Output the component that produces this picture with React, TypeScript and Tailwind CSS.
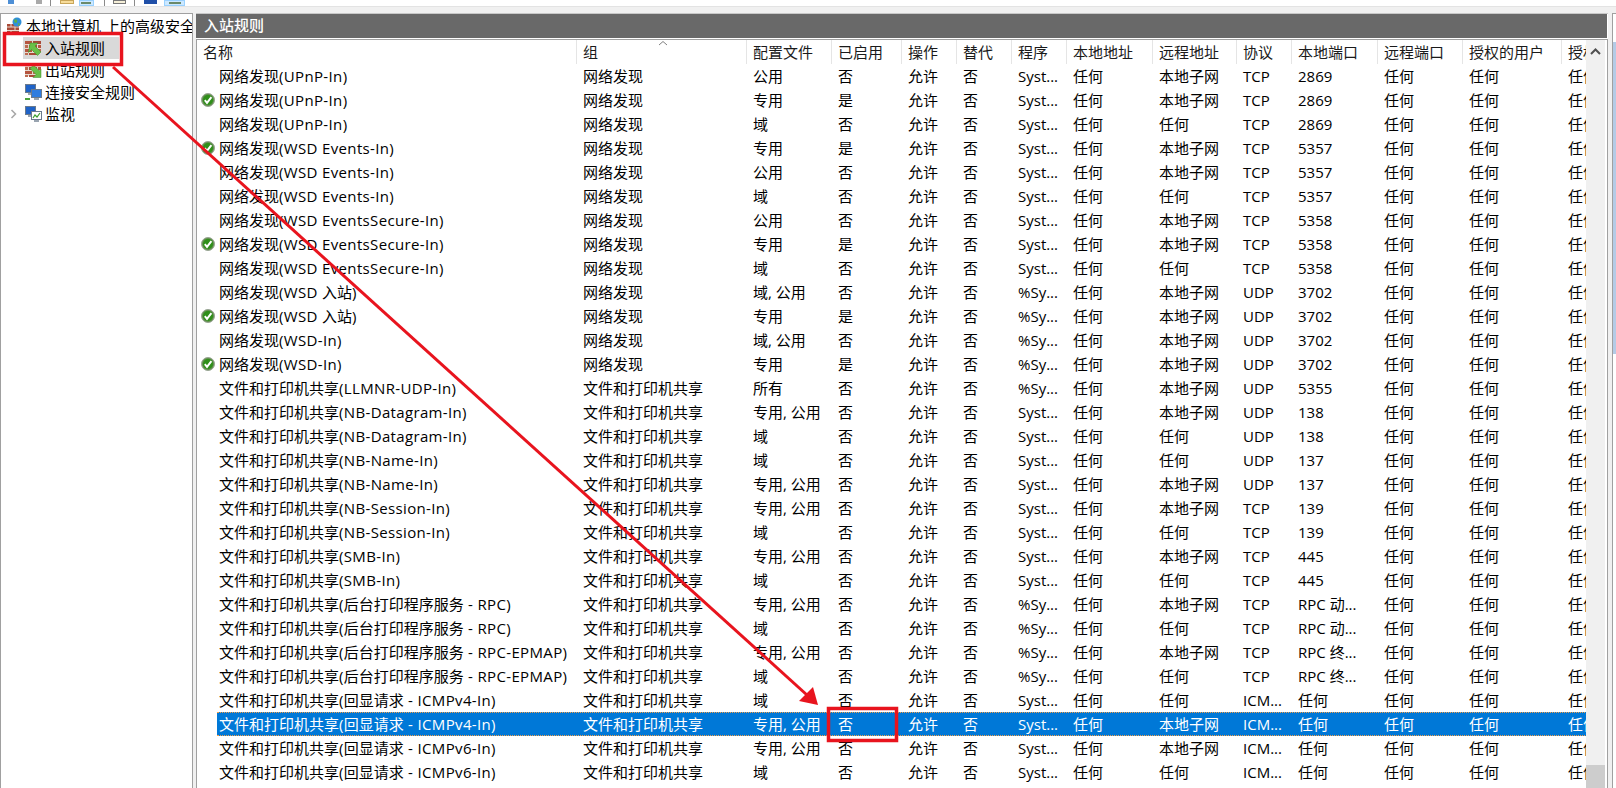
import { ReactNode } from 'react';

type Row = {
  name: string;
  group: string;
  profile: string;
  on: string;
  program: string;
  remote: string;
  proto: string;
  port: string;
  check?: boolean;
  selected?: boolean;
};

const NET = '网络发现';
const FILE = '文件和打印机共享';
const SUB = '本地子网';
const ANY = '任何';
const SYS = 'Syst...';
const PCT = '%Sy...';
const PP = '专用, 公用';

const rows: Row[] = [
  { name: '网络发现(UPnP-In)', group: NET, profile: '公用', on: '否', program: SYS, remote: SUB, proto: 'TCP', port: '2869' },
  { name: '网络发现(UPnP-In)', group: NET, profile: '专用', on: '是', program: SYS, remote: SUB, proto: 'TCP', port: '2869', check: true },
  { name: '网络发现(UPnP-In)', group: NET, profile: '域', on: '否', program: SYS, remote: ANY, proto: 'TCP', port: '2869' },
  { name: '网络发现(WSD Events-In)', group: NET, profile: '专用', on: '是', program: SYS, remote: SUB, proto: 'TCP', port: '5357', check: true },
  { name: '网络发现(WSD Events-In)', group: NET, profile: '公用', on: '否', program: SYS, remote: SUB, proto: 'TCP', port: '5357' },
  { name: '网络发现(WSD Events-In)', group: NET, profile: '域', on: '否', program: SYS, remote: ANY, proto: 'TCP', port: '5357' },
  { name: '网络发现(WSD EventsSecure-In)', group: NET, profile: '公用', on: '否', program: SYS, remote: SUB, proto: 'TCP', port: '5358' },
  { name: '网络发现(WSD EventsSecure-In)', group: NET, profile: '专用', on: '是', program: SYS, remote: SUB, proto: 'TCP', port: '5358', check: true },
  { name: '网络发现(WSD EventsSecure-In)', group: NET, profile: '域', on: '否', program: SYS, remote: ANY, proto: 'TCP', port: '5358' },
  { name: '网络发现(WSD 入站)', group: NET, profile: '域, 公用', on: '否', program: PCT, remote: SUB, proto: 'UDP', port: '3702' },
  { name: '网络发现(WSD 入站)', group: NET, profile: '专用', on: '是', program: PCT, remote: SUB, proto: 'UDP', port: '3702', check: true },
  { name: '网络发现(WSD-In)', group: NET, profile: '域, 公用', on: '否', program: PCT, remote: SUB, proto: 'UDP', port: '3702' },
  { name: '网络发现(WSD-In)', group: NET, profile: '专用', on: '是', program: PCT, remote: SUB, proto: 'UDP', port: '3702', check: true },
  { name: '文件和打印机共享(LLMNR-UDP-In)', group: FILE, profile: '所有', on: '否', program: PCT, remote: SUB, proto: 'UDP', port: '5355' },
  { name: '文件和打印机共享(NB-Datagram-In)', group: FILE, profile: PP, on: '否', program: SYS, remote: SUB, proto: 'UDP', port: '138' },
  { name: '文件和打印机共享(NB-Datagram-In)', group: FILE, profile: '域', on: '否', program: SYS, remote: ANY, proto: 'UDP', port: '138' },
  { name: '文件和打印机共享(NB-Name-In)', group: FILE, profile: '域', on: '否', program: SYS, remote: ANY, proto: 'UDP', port: '137' },
  { name: '文件和打印机共享(NB-Name-In)', group: FILE, profile: PP, on: '否', program: SYS, remote: SUB, proto: 'UDP', port: '137' },
  { name: '文件和打印机共享(NB-Session-In)', group: FILE, profile: PP, on: '否', program: SYS, remote: SUB, proto: 'TCP', port: '139' },
  { name: '文件和打印机共享(NB-Session-In)', group: FILE, profile: '域', on: '否', program: SYS, remote: ANY, proto: 'TCP', port: '139' },
  { name: '文件和打印机共享(SMB-In)', group: FILE, profile: PP, on: '否', program: SYS, remote: SUB, proto: 'TCP', port: '445' },
  { name: '文件和打印机共享(SMB-In)', group: FILE, profile: '域', on: '否', program: SYS, remote: ANY, proto: 'TCP', port: '445' },
  { name: '文件和打印机共享(后台打印程序服务 - RPC)', group: FILE, profile: PP, on: '否', program: PCT, remote: SUB, proto: 'TCP', port: 'RPC 动...' },
  { name: '文件和打印机共享(后台打印程序服务 - RPC)', group: FILE, profile: '域', on: '否', program: PCT, remote: ANY, proto: 'TCP', port: 'RPC 动...' },
  { name: '文件和打印机共享(后台打印程序服务 - RPC-EPMAP)', group: FILE, profile: PP, on: '否', program: PCT, remote: SUB, proto: 'TCP', port: 'RPC 终...' },
  { name: '文件和打印机共享(后台打印程序服务 - RPC-EPMAP)', group: FILE, profile: '域', on: '否', program: PCT, remote: ANY, proto: 'TCP', port: 'RPC 终...' },
  { name: '文件和打印机共享(回显请求 - ICMPv4-In)', group: FILE, profile: '域', on: '否', program: SYS, remote: ANY, proto: 'ICM...', port: ANY },
  { name: '文件和打印机共享(回显请求 - ICMPv4-In)', group: FILE, profile: PP, on: '否', program: SYS, remote: SUB, proto: 'ICM...', port: ANY, selected: true },
  { name: '文件和打印机共享(回显请求 - ICMPv6-In)', group: FILE, profile: PP, on: '否', program: SYS, remote: SUB, proto: 'ICM...', port: ANY },
  { name: '文件和打印机共享(回显请求 - ICMPv6-In)', group: FILE, profile: '域', on: '否', program: SYS, remote: ANY, proto: 'ICM...', port: ANY },
];

const headers = ['组', '配置文件', '已启用', '操作', '替代', '程序', '本地地址', '远程地址', '协议', '本地端口', '远程端口', '授权的用户', '授权的计算机'];

function Cell({ children }: { children: ReactNode }) {
  return <div className="overflow-hidden whitespace-nowrap pl-[7px]">{children}</div>;
}

// Latin runs are a bit wider in the reference than the CJK ones
function RuleName({ name }: { name: string }) {
  const parts = name.split(/([\u4e00-\u9fff]+)/).filter(Boolean);
  return (
    <>
      {parts.map((p, i) =>
        /[\u4e00-\u9fff]/.test(p) ? <span key={i}>{p}</span> : <span key={i} className="tracking-[0.35px]">{p}</span>,
      )}
    </>
  );
}

function CheckBadge() {
  return (
    <svg width="14" height="14" viewBox="0 0 14 14" className="ml-[4px] mt-[5px]">
      <circle cx="7" cy="7" r="6.500" fill="#5f8f4a" stroke="#9aa596" />
      <circle cx="7" cy="7" r="5" fill="#2f8f1a" />
      <path d="M3.800 7.200 6 9.800 10.400 4.200" fill="none" stroke="#fff" strokeWidth="2" />
    </svg>
  );
}

function Bricks({ children }: { children?: ReactNode }) {
  return (
    <svg width="17" height="16" viewBox="0 0 17 16" className="shrink-0">
      <rect x="0" y="1" width="16" height="13" fill="#e6d9cf" />
      <rect x="0" y="1" width="7" height="3" fill="#b5553f" />
      <rect x="8" y="1" width="8" height="3" fill="#a94a38" />
      <rect x="0" y="5" width="3" height="3" fill="#bd6a4f" />
      <rect x="4" y="5" width="8" height="3" fill="#a94a38" />
      <rect x="13" y="5" width="3" height="3" fill="#b5553f" />
      <rect x="0" y="9" width="7" height="3" fill="#b5553f" />
      <rect x="8" y="9" width="8" height="3" fill="#bd6a4f" />
      <rect x="0" y="13" width="3" height="2" fill="#bd6a4f" />
      <rect x="4" y="13" width="8" height="2" fill="#a94a38" />
      {children}
    </svg>
  );
}

function Computers({ chart }: { chart?: boolean }) {
  return (
    <svg width="17" height="17" viewBox="0 0 17 17" className="shrink-0">
      <rect x="0.500" y="0.500" width="10" height="8" fill="#1f63c8" stroke="#6b7a8c" />
      <rect x="3" y="9" width="5" height="2" fill="#9aa5b1" />
      <rect x="6.500" y="5.500" width="10" height="8" fill={chart ? '#fff' : '#2f7de0'} stroke="#6b7a8c" />
      {chart ? (
        <path d="M8 12 10 9 12 11 15 7" fill="none" stroke="#3aa02c" strokeWidth="1.200" />
      ) : (
        <path d="M0 14h5v2H0z" fill="#4aa33a" />
      )}
      <rect x="9" y="14" width="5" height="2" fill="#9aa5b1" />
    </svg>
  );
}

function SideItem({ icon, label, active }: { icon: ReactNode; label: string; active?: boolean }) {
  return (
    <div className={`ml-[22px] flex h-[22px] w-[96px] items-center gap-[3px] whitespace-nowrap pl-[2px] ${active ? 'bg-[#d9d9d9]' : ''}`}>
      {icon}
      <span>{label}</span>
    </div>
  );
}

function Toolbar() {
  return (
    <div className="flex h-[7px] items-start overflow-hidden border-b border-[#e3e3e3] bg-white">
      <div className="ml-[8px] mt-[-1px] h-[5px] w-[6px] bg-[#4d8fd6]" />
      <div className="ml-[22px] mt-[-1px] h-[5px] w-[6px] bg-[#a9a9a9]" />
      <div className="ml-[8px] h-[6px] w-px bg-[#8a8a8a]" />
      <div className="ml-[9px] h-[4px] w-[14px] border border-[#c9a65a] bg-[#f7dc9a]" />
      <div className="ml-[5px] h-[6px] w-[15px] border border-[#99d1ff] bg-[#cce8ff] p-px"><div className="h-[2px] w-[10px] bg-[#6a8a6a]" /></div>
      <div className="ml-[10px] h-[6px] w-px bg-[#8a8a8a]" />
      <div className="ml-[8px] h-[4px] w-[13px] border border-[#777] bg-[#f5efd8]" />
      <div className="ml-[8px] h-[6px] w-px bg-[#8a8a8a]" />
      <div className="ml-[9px] h-[4px] w-[13px] bg-[#1f4fa8]" />
      <div className="ml-[7px] h-[6px] w-[21px] border border-[#99d1ff] bg-[#cce8ff] p-px"><div className="ml-[3px] h-[2px] w-[12px] bg-[#6a8a6a]" /></div>
    </div>
  );
}

export default function App() {
  return (
    <div className="relative h-[788px] w-[1616px] overflow-hidden bg-[#f0f0f0] font-['Open_Sans','Noto_Sans_CJK_SC',sans-serif] text-[15px] leading-6 text-black">
      <Toolbar />
      <div className="mt-[6px] flex h-[775px]">
        {/* Tree */}
        <div className="w-[193px] overflow-hidden border border-b-0 border-[#a0a0a0] bg-white">
          <div className="flex h-[23px] items-center gap-[3px] whitespace-nowrap pl-[6px]">
            <svg width="16" height="18" viewBox="0 0 16 18" className="shrink-0">
              <rect x="0" y="7" width="12" height="10" fill="#a94a38" />
              <path d="M0 10h12M0 13.500h12M4 7v3M8 10v3.500M4 13.500V17" stroke="#e6d9cf" />
              <circle cx="10" cy="5" r="4.500" fill="#2f8fd8" />
              <path d="M7 3c2-2 4 0 3 2s-3 1-3-2zM11 6l2 1-2 2z" fill="#5cb04a" />
            </svg>
            <span className="min-w-0 flex-1 overflow-hidden">本地计算机 上的高级安全</span>
          </div>
          <SideItem
            active
            label="入站规则"
            icon={<Bricks><path d="M5 3h8l-3 3 6 6-3.500 3.500-6-6-3 3z" fill="#68c048" stroke="#3d8a2c" strokeWidth="0.500" /></Bricks>}
          />
          <SideItem
            label="出站规则"
            icon={<Bricks><path d="M16 15.500H8l3-3-6-6L8.500 3l6 6 1.500-1.500z" fill="#68c048" stroke="#3d8a2c" strokeWidth="0.500" /></Bricks>}
          />
          <SideItem label="连接安全规则" icon={<Computers />} />
          <div className="relative">
            <svg width="8" height="10" viewBox="0 0 8 10" className="absolute left-[9px] top-[6px]">
              <path d="M1.500 1 5.500 5l-4 4" fill="none" stroke="#a6a6a6" strokeWidth="1.500" />
            </svg>
            <SideItem label="监视" icon={<Computers chart />} />
          </div>
        </div>

        {/* Rule list */}
        <div className="ml-[3px] flex w-[1412px] flex-col">
          <div className="flex h-[26px] border-t border-[#c8c8c8] bg-white">
            <div className="mb-px mr-px h-[24px] flex-1 bg-[#696969] pl-[8px] font-medium leading-[23px] text-white">入站规则</div>
          </div>
          <div className="flex min-h-0 flex-1 border-x border-t border-[#a0a0a0] bg-white">
            <div className="w-[1389px] overflow-hidden">
              <div className="relative grid h-6 w-[1512px] grid-cols-[379px_170px_85px_70px_55px_55px_55px_86px_84px_55px_86px_85px_99px_125px] text-[#1a1a1a]">
                <div className="pl-[6px]">名称</div>
                {headers.map((h) => (
                  <div key={h} className="overflow-hidden whitespace-nowrap border-l border-[#e5e5e5] pl-[6px]">{h}</div>
                ))}
                <svg width="10" height="6" viewBox="0 0 10 6" className="absolute left-[461px] top-0">
                  <path d="M1 5 5 1.500 9 5" fill="none" stroke="#808080" />
                </svg>
              </div>
              {rows.map((r, i) => (
                <div key={i} className="flex h-6 w-[1512px]">
                  <div className="w-[20px] shrink-0">{r.check && <CheckBadge />}</div>
                  <div
                    className={`grid h-6 flex-1 grid-cols-[359px_170px_85px_70px_55px_55px_55px_86px_84px_55px_86px_85px_99px_125px] ${
                      r.selected ? 'border-y border-dotted border-[#f2a04c] bg-[#0078d7] leading-[22px] text-white' : ''
                    }`}
                  >
                    <div className="overflow-hidden whitespace-nowrap pl-[2px]"><RuleName name={r.name} /></div>
                    <Cell>{r.group}</Cell>
                    <Cell>{r.profile}</Cell>
                    <Cell>{r.on}</Cell>
                    <Cell>允许</Cell>
                    <Cell>否</Cell>
                    <Cell>{r.program}</Cell>
                    <Cell>任何</Cell>
                    <Cell>{r.remote}</Cell>
                    <Cell>{r.proto}</Cell>
                    <Cell>{r.port}</Cell>
                    <Cell>任何</Cell>
                    <Cell>任何</Cell>
                    <Cell>任何</Cell>
                  </div>
                </div>
              ))}
            </div>
            <div className="flex w-[19px] flex-col justify-between bg-[#f0f0f0]">
              <svg width="19" height="19" viewBox="0 0 19 19" className="mt-[2px]">
                <path d="M5 12 9.500 7.500 14 12" fill="none" stroke="#505050" strokeWidth="2" />
              </svg>
              <div className="h-[23px] bg-[#cdcdcd]" />
            </div>
          </div>
        </div>

        {/* Actions pane edge */}
        <div className="ml-[4px] flex-1 border-l border-t border-[#a0a0a0] bg-white pt-[28px]">
          <div className="h-[312px] bg-[#b4cbe6]" />
        </div>
      </div>

      {/* Red annotation */}
      <svg width="1616" height="788" viewBox="0 0 1616 788" className="pointer-events-none absolute left-0 top-0">
        <rect x="4.500" y="33.500" width="117" height="31" fill="none" stroke="#e8141e" strokeWidth="3.500" />
        <rect x="828.500" y="708.500" width="68" height="32" fill="none" stroke="#e8141e" strokeWidth="3.500" />
        <path d="M113 67 807 695" fill="none" stroke="#e8141e" strokeWidth="3" />
        <path d="M818 705 799 701 813 687z" fill="#e8141e" />
      </svg>
    </div>
  );
}
